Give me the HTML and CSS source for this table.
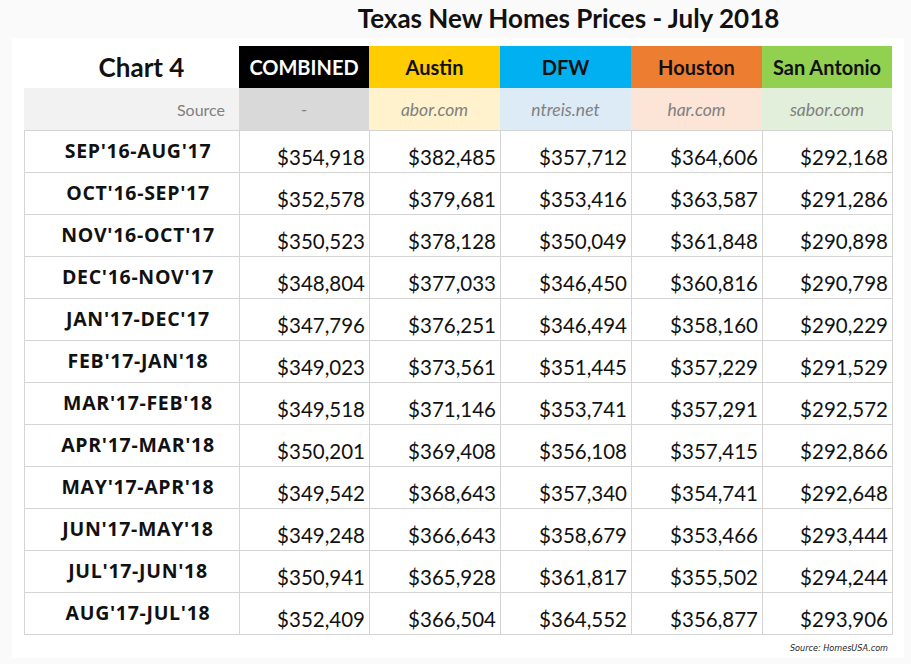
FILE: index.html
```html
<!DOCTYPE html>
<html>
<head>
<meta charset="utf-8">
<link rel="stylesheet" href="styles.css">
</head>
<body>
<div class="page">
  <h1 class="title">Texas New Homes Prices - July 2018</h1>
  <div class="panel">
    <div class="grid head">
      <div class="chart">Chart 4</div>
      <div class="h combined">COMBINED</div>
      <div class="h austin">Austin</div>
      <div class="h dfw">DFW</div>
      <div class="h houston">Houston</div>
      <div class="h sa">San Antonio</div>

      <div class="src-label">Source</div>
      <div class="s combined-s">-</div>
      <div class="s austin-s">abor.com</div>
      <div class="s dfw-s">ntreis.net</div>
      <div class="s houston-s">har.com</div>
      <div class="s sa-s">sabor.com</div>
    </div>
    <div class="grid data">
      <div class="lbl">SEP'16-AUG'17</div><div class="v">$354,918</div><div class="v">$382,485</div><div class="v">$357,712</div><div class="v">$364,606</div><div class="v">$292,168</div>
      <div class="lbl">OCT'16-SEP'17</div><div class="v">$352,578</div><div class="v">$379,681</div><div class="v">$353,416</div><div class="v">$363,587</div><div class="v">$291,286</div>
      <div class="lbl">NOV'16-OCT'17</div><div class="v">$350,523</div><div class="v">$378,128</div><div class="v">$350,049</div><div class="v">$361,848</div><div class="v">$290,898</div>
      <div class="lbl">DEC'16-NOV'17</div><div class="v">$348,804</div><div class="v">$377,033</div><div class="v">$346,450</div><div class="v">$360,816</div><div class="v">$290,798</div>
      <div class="lbl">JAN'17-DEC'17</div><div class="v">$347,796</div><div class="v">$376,251</div><div class="v">$346,494</div><div class="v">$358,160</div><div class="v">$290,229</div>
      <div class="lbl">FEB'17-JAN'18</div><div class="v">$349,023</div><div class="v">$373,561</div><div class="v">$351,445</div><div class="v">$357,229</div><div class="v">$291,529</div>
      <div class="lbl">MAR'17-FEB'18</div><div class="v">$349,518</div><div class="v">$371,146</div><div class="v">$353,741</div><div class="v">$357,291</div><div class="v">$292,572</div>
      <div class="lbl">APR'17-MAR'18</div><div class="v">$350,201</div><div class="v">$369,408</div><div class="v">$356,108</div><div class="v">$357,415</div><div class="v">$292,866</div>
      <div class="lbl">MAY'17-APR'18</div><div class="v">$349,542</div><div class="v">$368,643</div><div class="v">$357,340</div><div class="v">$354,741</div><div class="v">$292,648</div>
      <div class="lbl">JUN'17-MAY'18</div><div class="v">$349,248</div><div class="v">$366,643</div><div class="v">$358,679</div><div class="v">$353,466</div><div class="v">$293,444</div>
      <div class="lbl">JUL'17-JUN'18</div><div class="v">$350,941</div><div class="v">$365,928</div><div class="v">$361,817</div><div class="v">$355,502</div><div class="v">$294,244</div>
      <div class="lbl">AUG'17-JUL'18</div><div class="v">$352,409</div><div class="v">$366,504</div><div class="v">$364,552</div><div class="v">$356,877</div><div class="v">$293,906</div>
    </div>
    <div class="footer">Source: HomesUSA.com</div>
  </div>
</div>
</body>
</html>
```

FILE: styles.css
```css
* { box-sizing: border-box; }
html, body { margin: 0; padding: 0; }
body {
  background: #fafafa;
  font-family: Lato, "Open Sans", sans-serif;
  color: #111;
  width: 911px;
  height: 664px;
  overflow: hidden;
}
.page { width: 911px; }
.title {
  margin: 0;
  height: 38px;
  padding-left: 226px;
  text-align: center;
  font-size: 26px;
  font-weight: 700;
  line-height: 36px;
  color: #111;
}
.panel {
  margin-left: 12px;
  width: 892px;
  height: 620px;
  background: #fff;
  padding: 8px 0 0 12px;
}
.grid {
  display: grid;
  grid-template-columns: 215px 130px 131px 131px 131px 130px;
  width: 868px;
}
.head { grid-auto-rows: 42px; }
.head > div {
  display: flex;
  align-items: center;
  justify-content: center;
}
.chart {
  padding-left: 20px;
  font-size: 26px;
  font-weight: 700;
  color: #111;
}
.h { font-size: 20px; font-weight: 700; color: #111; }
.combined { background: #000; color: #fff; }
.austin { background: #ffcc00; }
.dfw { background: #00b0f0; }
.houston { background: #ed7d31; }
.sa { background: #92d050; }
.head .src-label {
  justify-content: flex-end;
  padding-right: 14px;
  background: #f2f2f2;
  color: #808080;
  font-size: 16px;
}
.s { font-size: 17.5px; font-style: italic; color: #808080; }
.combined-s { background: #d9d9d9; }
.austin-s { background: #fff2cc; }
.dfw-s { background: #ddebf7; }
.houston-s { background: #fce4d6; }
.sa-s { background: #e2efda; }

.data {
  grid-auto-rows: 42px;
  border-top: 1px solid #d4d4d4;
  border-left: 1px solid #d4d4d4;
}
.data > div {
  border-right: 1px solid #d4d4d4;
  border-bottom: 1px solid #d4d4d4;
  display: flex;
}
.lbl {
  align-items: center;
  justify-content: center;
  padding: 0 0 3px 12px;
  font-family: "Open Sans", Lato, sans-serif;
  font-size: 19.5px;
  letter-spacing: 0.7px;
  font-weight: 700;
  color: #111;
}
.v {
  align-items: flex-end;
  justify-content: flex-end;
  padding: 0 4px 3px 0;
  font-size: 20.5px;
  color: #111;
}
.footer {
  width: 868px;
  text-align: right;
  padding: 8px 4px 0 0;
  font-family: "DejaVu Sans Condensed", "DejaVu Sans", sans-serif;
  font-stretch: condensed;
  font-style: italic;
  font-size: 9px;
  color: #222;
}
```
